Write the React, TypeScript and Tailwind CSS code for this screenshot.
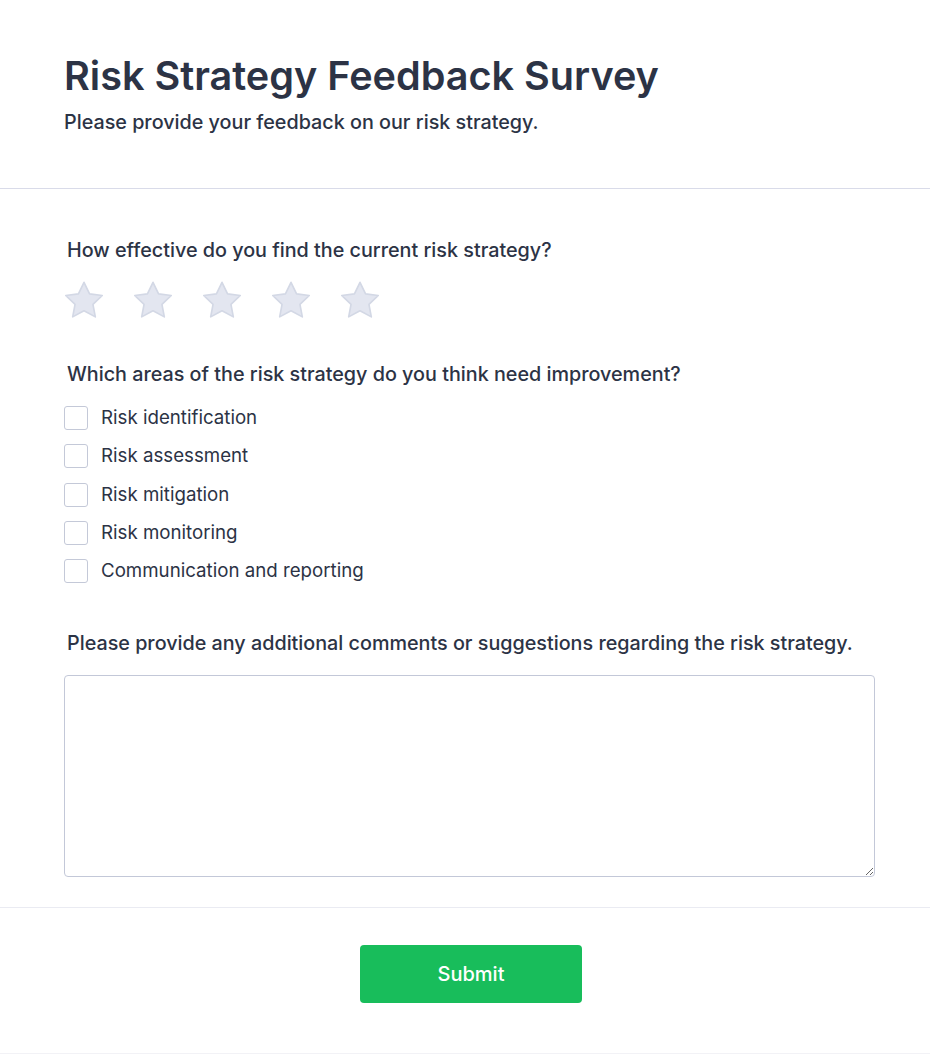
import React from "react";

const Star = () => (
  <svg width="44" height="42" viewBox="0 0 24 23" className="block">
    <path
      d="M12 1.8l3.05 6.35 6.95.9-5.1 4.8 1.3 6.9L12 17.4l-6.2 3.35 1.3-6.9L2 9.05l6.95-.9L12 1.8z"
      fill="#e3e6f0"
      stroke="#d3d8e5"
      strokeWidth="0.9"
      strokeLinejoin="round"
    />
  </svg>
);

const options = [
  "Risk identification",
  "Risk assessment",
  "Risk mitigation",
  "Risk monitoring",
  "Communication and reporting",
];

export default function App() {
  return (
    <div
      className="w-[930px] bg-white text-[#2c3345] border-b border-[#f2f2f6]"
      style={{ fontFamily: "Inter, 'Noto Sans', sans-serif" }}
    >
      <div className="px-16 pt-[52px] pb-[52px] border-b border-[#d9dbe9]">
        <h1 className="text-[39.6px] leading-[48px] font-semibold">
          Risk Strategy Feedback Survey
        </h1>
        <p className="mt-[8px] text-[19.75px] leading-[28px] font-medium">
          Please provide your feedback on our risk strategy.
        </p>
      </div>

      <div className="px-16 pt-[47px]">
        <div className="pl-[3px] text-[19.75px] leading-[28px] font-medium">
          How effective do you find the current risk strategy?
        </div>
        <div className="mt-[15px] -ml-[2px] flex gap-[25px]">
          {[0, 1, 2, 3, 4].map((i) => (
            <Star key={i} />
          ))}
        </div>

        <div className="mt-[39px] pl-[3px] text-[19.75px] leading-[28px] font-medium">
          Which areas of the risk strategy do you think need improvement?
        </div>
        <div className="mt-[18px] flex flex-col gap-[14.3px]">
          {options.map((o) => (
            <label key={o} className="flex items-center gap-[13px] h-[24px]">
              <span className="w-[24px] h-[24px] rounded-[3px] border border-[#c4c9d8] bg-white" />
              <span className="text-[18.7px] leading-[24px] text-[#2c3345]">{o}</span>
            </label>
          ))}
        </div>

        <div className="mt-[46px] pl-[3px] text-[19.75px] leading-[28px] font-medium">
          Please provide any additional comments or suggestions regarding the risk strategy.
        </div>
        <textarea className="mt-[18px] block w-[811px] h-[202px] rounded-[4px] border border-[#c3c8d8] bg-white outline-none" />
      </div>

      <div className="mt-[30px] border-t border-[#eaebf2] flex justify-center pl-[12px] pt-[37px] pb-[50px]">
        <button className="w-[222px] h-[58px] rounded-[4px] bg-[#18bd5b] text-white text-[20px] font-medium">
          Submit
        </button>
      </div>
    </div>
  );
}
